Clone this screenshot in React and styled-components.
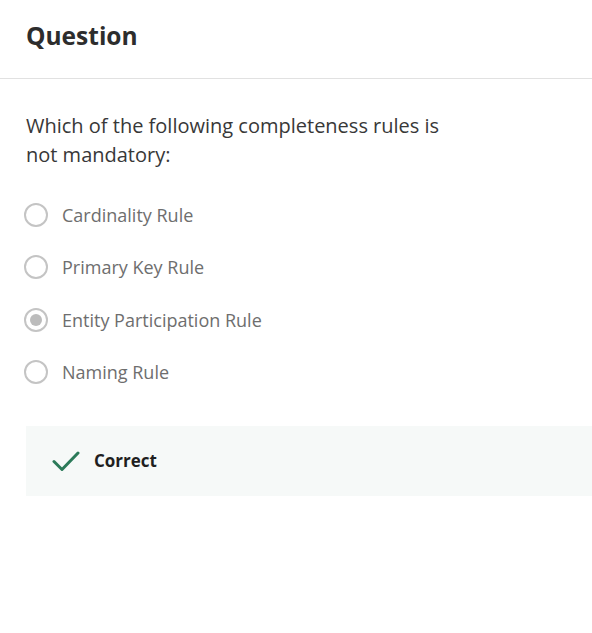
import React from "react";
import styled, { createGlobalStyle } from "styled-components";

const GlobalStyle = createGlobalStyle`
  html, body {
    margin: 0;
    padding: 0;
    background: #fff;
    font-family: "Open Sans", "Liberation Sans", sans-serif;
    overflow: hidden;
  }
`;

const Page = styled.div`
  width: 592px;
`;

const Header = styled.header`
  height: 79px;
  border-bottom: 1px solid #e1e1e1;
  padding-left: 26px;
  display: flex;
  align-items: center;
  box-sizing: border-box;
`;

const Title = styled.h1`
  margin: 0 0 7px;
  font-size: 24.5px;
  font-weight: 700;
  color: #2d2d2d;
`;

const Body = styled.div`
  padding: 32px 0 0 26px;
`;

const Prompt = styled.p`
  margin: 0;
  max-width: 430px;
  font-size: 20px;
  line-height: 29px;
  color: #383838;
`;

const Options = styled.ul`
  list-style: none;
  margin: 34px 0 0;
  padding: 0;
  display: flex;
  flex-direction: column;
  gap: 28.3px;
`;

const Option = styled.li`
  display: flex;
  align-items: center;
  gap: 14px;
  height: 24px;
  margin-left: -2px;
  font-size: 18px;
  color: #6e6e6e;
`;

const Radio = styled.span`
  width: 24px;
  height: 24px;
  box-sizing: border-box;
  border-radius: 50%;
  border: 2px solid #c4c4c4;
  display: flex;
  align-items: center;
  justify-content: center;
  flex-shrink: 0;
  &::after {
    content: "";
    width: 12px;
    height: 12px;
    border-radius: 50%;
    background: ${(p) => (p.$checked ? "#bcbcbc" : "transparent")};
  }
`;

const Feedback = styled.div`
  margin-top: 42px;
  height: 70px;
  background: #f6f9f8;
  display: flex;
  align-items: center;
  gap: 14px;
  padding-left: 26px;
`;

const Label = styled.span`
  font-size: 17px;
  font-weight: 700;
  color: #1f1f1f;
`;

const options = [
  "Cardinality Rule",
  "Primary Key Rule",
  "Entity Participation Rule",
  "Naming Rule",
];

function Check() {
  return (
    <svg width="28" height="24" viewBox="0 0 28 24" fill="none">
      <path d="M2 12.5 L10 20.5 L26 4" stroke="#2b7a59" strokeWidth="3" strokeLinecap="round" strokeLinejoin="round" />
    </svg>
  );
}

export default function App() {
  return (
    <Page>
      <GlobalStyle />
      <Header>
        <Title>Question</Title>
      </Header>
      <Body>
        <Prompt>Which of the following completeness rules is not mandatory:</Prompt>
        <Options>
          {options.map((o, i) => (
            <Option key={o}>
              <Radio $checked={i === 2} />
              {o}
            </Option>
          ))}
        </Options>
        <Feedback>
          <Check />
          <Label>Correct</Label>
        </Feedback>
      </Body>
    </Page>
  );
}
